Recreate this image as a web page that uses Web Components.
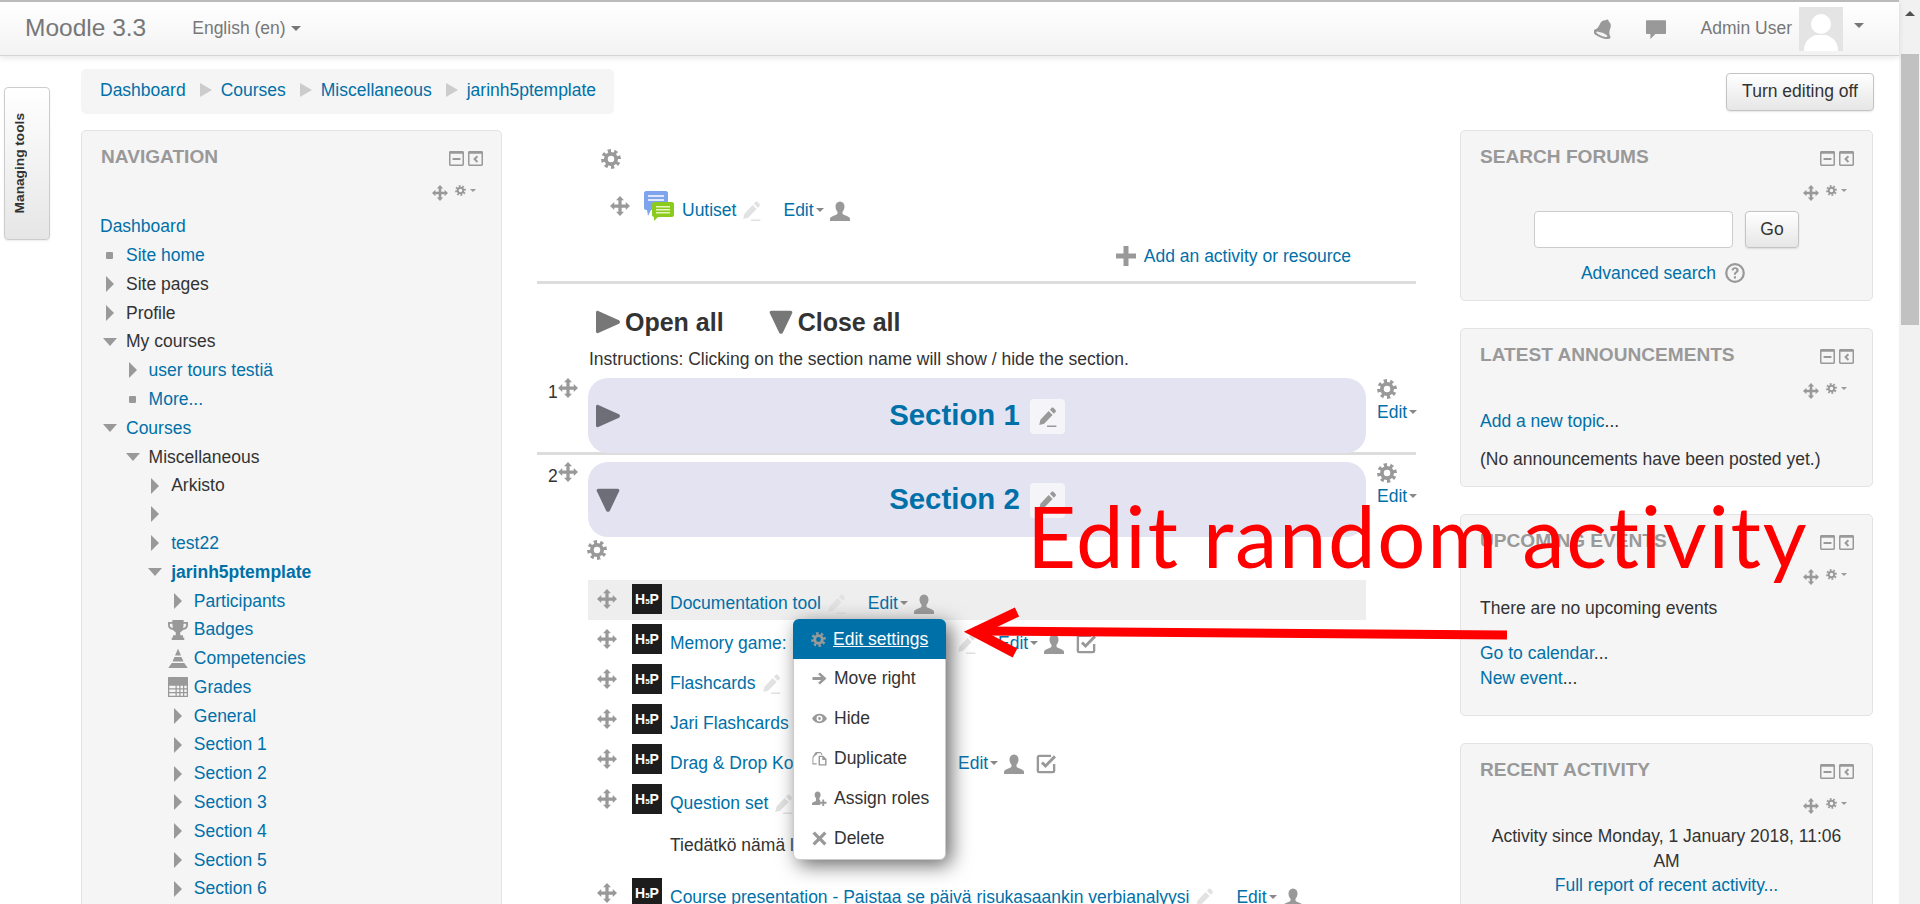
<!DOCTYPE html>
<html>
<head>
<meta charset="utf-8">
<title>Moodle 3.3</title>
<style>
html, body { margin: 0; height: 904px; overflow: hidden; background: #fff; }
body { position: relative; display: flex; font: 17.5px/24.5px "Liberation Sans", Arial, sans-serif; color: #333; }
a { color: #0070a8; text-decoration: none; }
</style>
</head>
<body>
<page-shell>
  <moodle-header></moodle-header>
  <div style="display:flex">
    <managing-tab></managing-tab>
    <div style="width:1792px">
      <top-bar></top-bar>
      <div style="display:flex;align-items:flex-start;margin-top:16px">
        <moodle-block title="NAVIGATION" style="width:421px;height:800px"><nav-tree></nav-tree></moodle-block>
        <course-content style="margin-left:35px;width:879px"></course-content>
        <div style="margin-left:44px;width:413px;display:flex;flex-direction:column;gap:27px">
          <moodle-block title="SEARCH FORUMS" style="height:171px"><search-form></search-form></moodle-block>
          <moodle-block title="LATEST ANNOUNCEMENTS" style="height:159px">
            <div><a href="#">Add a new topic</a>...</div>
            <div style="margin-top:13px">(No announcements have been posted yet.)</div>
          </moodle-block>
          <moodle-block title="UPCOMING EVENTS" style="height:202px">
            <div style="margin-top:1px">There are no upcoming events</div>
            <div style="margin-top:20px"><a href="#">Go to calendar</a>...</div>
            <div style="margin-top:1px"><a href="#">New event</a>...</div>
          </moodle-block>
          <moodle-block title="RECENT ACTIVITY" style="height:300px">
            <div style="text-align:center">Activity since Monday, 1 January 2018, 11:06 AM</div>
            <div style="text-align:center"><a href="#">Full report of recent activity...</a></div>
          </moodle-block>
        </div>
      </div>
    </div>
  </div>
</page-shell>
<fake-scrollbar></fake-scrollbar>
<edit-menu></edit-menu>
<red-annotation></red-annotation>

<script>
const linkCss = 'a { color: #0070a8; text-decoration: none; }'

function gearPath () {
  // eight teeth round a hole, drawn in a 16 box
  let d = ''
  for (let i = 0; i < 16; i++) {
    const a = (i - 0.5) * Math.PI / 8 - Math.PI / 16
    const r = (Math.floor(i / 2) === i / 2) ? 8 : 5.6
    const a2 = a + Math.PI / 8
    d += (i ? 'L' : 'M') + (8 + r * Math.cos(a)).toFixed(2) + ' ' + (8 + r * Math.sin(a)).toFixed(2)
    d += 'L' + (8 + r * Math.cos(a2)).toFixed(2) + ' ' + (8 + r * Math.sin(a2)).toFixed(2)
  }
  return d + 'Z M8 5.4a2.6 2.6 0 1 0 0 5.2a2.6 2.6 0 1 0 0-5.2Z'
}

const icons = {
  gear: `<path fill-rule="evenodd" d="${gearPath()}"/>`,
  move: '<path d="M8 0l3.2 3.4H9.3v3.3h3.3V4.8L16 8l-3.4 3.2V9.3H9.3v3.3h1.9L8 16l-3.2-3.4h1.9V9.3H3.4v1.9L0 8l3.4-3.2v1.9h3.3V3.4H4.8z"/>',
  pencil: '<path d="M11.6.8c.5-.5 1.2-.5 1.700 0l1.500 1.500c.5.5.5 1.200 0 1.700l-1.300 1.300-3.200-3.200zM9.300 3.100l3.200 3.200-6.800 7-3.900 1 .9-4.100zM8 14.800h7.500V16H8z"/>',
  person: '<path d="M8 .4c2.200 0 3.600 1.700 3.600 4 0 1.700-.7 3.200-1.600 4.100v1.300c0 .8 1 1.200 2.600 1.800 1.900.7 3.400 1.400 3.400 2.700V16H0v-1.700c0-1.300 1.500-2 3.400-2.700C5 11 6 10.600 6 9.800V8.500C5.100 7.600 4.400 6.100 4.400 4.400c0-2.300 1.400-4 3.600-4z"/>',
  check: '<path fill="none" stroke="currentColor" stroke-width="1.900" d="M12 1.500H2.500a1 1 0 0 0-1 1v11a1 1 0 0 0 1 1h11a1 1 0 0 0 1-1V8"/><path d="M7.600 11.200L3.900 7.500l1.700-1.600 2 2L14.300 1 16 2.700z"/>',
  plus: '<path d="M6 0h4v6h6v4h-6v6H6v-6H0V6h6z"/>',
  bell: '<g transform="rotate(22 8 8)"><path d="M8 0c.7 0 1.100.4 1.200 1 2.100.5 3.300 2.200 3.300 4.600 0 3 .8 4.600 2.300 6H1.200c1.500-1.400 2.300-3 2.300-6C3.500 3.200 4.700 1.500 6.800 1 6.900.4 7.300 0 8 0z"/><ellipse cx="8" cy="12.600" rx="7.400" ry="2.800"/><ellipse cx="8" cy="12.600" rx="4.800" ry="1.300" fill="#f4f4f4"/></g>',
  chat: '<path d="M.6 1h14.800c.3 0 .6.300.6.600v9.800c0 .3-.3.600-.6.600H7.500L3.500 16v-4H.6c-.3 0-.6-.3-.6-.6V1.600C0 1.300.300 1 .6 1z"/>',
  minbox: '<path fill-rule="evenodd" d="M1.500 0h13c.8 0 1.500.7 1.500 1.500v13c0 .8-.7 1.500-1.500 1.500h-13C.7 16 0 15.300 0 14.500v-13C0 .7.700 0 1.500 0zM1.600 3v11.400h12.800V3zM3.800 7.500h8.400v2.200H3.800z"/>',
  dockbox: '<path fill-rule="evenodd" d="M1.500 0h13c.8 0 1.500.7 1.500 1.500v13c0 .8-.7 1.500-1.500 1.500h-13C.7 16 0 15.300 0 14.500v-13C0 .7.700 0 1.500 0zM1.600 3v11.400h12.800V3zM9.300 4.800l1.500 1.500-2.300 2.300 2.300 2.300-1.500 1.500-3.800-3.800z"/>',
  help: '<circle cx="8" cy="8" r="7" fill="none" stroke="currentColor" stroke-width="1.800"/><path d="M5.200 6c.1-1.700 1.300-2.600 2.900-2.600 1.700 0 2.800 1 2.800 2.300 0 1.100-.6 1.700-1.400 2.200-.7.5-.8.700-.8 1.400H7.100c0-1.200.3-1.800 1.200-2.400.6-.4.800-.7.800-1.100 0-.5-.4-.9-1-.9-.7 0-1.100.4-1.200 1.100zM7.100 10.500h1.700v1.900H7.100z"/>',
  trophy: '<path fill-rule="evenodd" d="M3.500 0h9v1.500H16V4c0 2.400-1.500 3.700-4 4-.6.900-1.400 1.400-2.200 1.700v2.500H12V14h1v2H3v-2h1v-1.800h2.200V9.700C5.400 9.400 4.600 8.900 4 8 1.500 7.700 0 6.400 0 4V1.500h3.500zM1.500 3v1c0 1.200.7 2 2.400 2.400-.2-1-.3-2.100-.4-3.400zm13 0h-2c-.1 1.300-.2 2.400-.4 3.400 1.700-.4 2.400-1.200 2.400-2.400z"/>',
  pyramid: '<path d="M8 .5L10.400 6H5.600zM5.200 7.200h5.600l1.600 3.600H3.600zM3 12h10l2.800 4H.2z"/>',
  grades: '<path fill-rule="evenodd" d="M.5 0h15c.3 0 .5.200.5.500v15c0 .3-.2.500-.5.500H.5c-.3 0-.5-.2-.5-.5V.5C0 .2.200 0 .5 0zM1 7v2h5V7zm6 0v2h2V7zm3 0v2h2V7zm3 0v2h2V7zM1 10v2h5v-2zm6 0v2h2v-2zm3 0v2h2v-2zm3 0v2h2v-2zM1 13v2h5v-2zm6 0v2h2v-2zm3 0v2h2v-2zm3 0v2h2v-2z"/>',
  right: '<path d="M1.500.6l13.800 6.300c.9.400.9 1.800 0 2.200L1.500 15.400C.7 15.700 0 15.200 0 14.400V1.600C0 .8.700.3 1.500.6z"/>',
  down: '<path d="M1.600.5h12.800c.9 0 1.400.8 1.100 1.500L9.200 15.200c-.4.900-2 .9-2.400 0L.5 2C.2 1.300.7.500 1.600.5z"/>',
  arrowr: '<path d="M8.500 1.500L15.500 8l-7 6.500-2-1.900L9.700 9.500H.5v-3h9.200L6.500 3.400z"/>',
  eye: '<path fill-rule="evenodd" d="M8 3c3.300 0 6.200 2 8 5-1.800 3-4.700 5-8 5s-6.200-2-8-5c1.800-3 4.700-5 8-5zm0 1.800a3.200 3.200 0 1 0 0 6.400 3.200 3.200 0 0 0 0-6.400zM8 6.500a1.500 1.500 0 1 1 0 3 1.500 1.500 0 0 1 0-3z"/>',
  dup: '<path fill-rule="evenodd" d="M4 1h5l2 2v1H9.500V2.500H5.500V4H4.500L1.500 7v6H5v1.500H.5V6.500zM7 5h5l3.500 3.500v7H7zM8.500 6.500v7.500h5.500V9.500h-3V6.500z"/>',
  roleadd: '<path d="M6 .5c2 0 3.200 1.500 3.200 3.600 0 1.500-.6 2.800-1.400 3.600v1.200c0 .5.300.8 1 1.100V15H0v-1.500c0-1.200 1.300-1.800 3-2.400 1-.4 1.300-.7 1.300-1.300V7.700C3.400 6.900 2.800 5.600 2.800 4.100 2.800 2 4 .5 6 .5zM11 9h2v2.500h2.500v2H13V16h-2v-2.500H8.800v-2H11z"/>',
  cross: '<path d="M3 .5L8 5.500l5-5L15.500 3l-5 5 5 5-2.500 2.500-5-5-5 5L.5 13l5-5-5-5z"/>'
}

customElements.define('m-icon', class extends HTMLElement {
  constructor () {
    super()
    const size = this.getAttribute('size') || 16
    const color = this.getAttribute('color') || '#999'
    const name = this.getAttribute('name')
    this.attachShadow({ mode: 'open' }).innerHTML = `
      <style>
        :host { display: inline-flex; flex: none; width: ${size}px; height: ${size}px; color: ${color}; }
        svg { width: 100%; height: 100%; fill: currentColor; display: block; }
      </style>
      <svg viewBox="0 0 16 16">${icons[name] || ''}</svg>`
  }
})

customElements.define('page-shell', class extends HTMLElement {
  constructor () {
    super()
    this.attachShadow({ mode: 'open' }).innerHTML = `
      <style>:host { display: block; flex: 1; min-width: 0; }</style><slot></slot>`
  }
})

customElements.define('fake-scrollbar', class extends HTMLElement {
  constructor () {
    super()
    this.attachShadow({ mode: 'open' }).innerHTML = `
      <style>
        :host { display: flex; flex-direction: column; flex: none; width: 21px; height: 904px; background: #f1f1f1; box-sizing: border-box; padding: 0 1px 0 2px; }
        .up { height: 54px; display: flex; justify-content: center; padding-top: 11px; box-sizing: border-box; }
        .up i { width: 0; height: 0; border: 5px solid transparent; border-top: 0; border-bottom: 5px solid #505050; }
        .thumb { height: 271px; background: #c1c1c1; }
      </style>
      <div class="up"><i></i></div>
      <div class="thumb"></div>`
  }
})

customElements.define('moodle-header', class extends HTMLElement {
  constructor () {
    super()
    this.attachShadow({ mode: 'open' }).innerHTML = `
      <style>
        :host { display: flex; align-items: center; height: 56px; box-sizing: border-box; position: relative; z-index: 2;
          border-top: 2px solid #bbb; border-bottom: 1px solid #d4d4d4; background: linear-gradient(#fff, #f3f3f3);
          box-shadow: 0 2px 6px rgba(0,0,0,.1); color: #777; padding-left: 25px; }
        .brand { font-size: 24.5px; }
        .lang { margin-left: 46px; display: flex; align-items: center; gap: 5px; }
        .caret { width: 0; height: 0; border: 5px solid transparent; border-bottom: 0; border-top: 5px solid #777; }
        .right { margin-left: auto; display: flex; align-items: center; }
        .user { margin-left: 35px; }
        .avatar { margin-left: 7px; width: 44px; height: 44px; background: #e4e4e4; }
        .avatar svg { display: block; width: 44px; height: 44px; fill: #fff; }
      </style>
      <span class="brand">Moodle 3.3</span>
      <span class="lang">English (en)<i class="caret"></i></span>
      <div class="right">
        <m-icon name="bell" size="20" color="#999"></m-icon>
        <m-icon name="chat" size="20" color="#999" style="margin-left:32px"></m-icon>
        <span class="user">Admin User</span>
        <div class="avatar"><svg viewBox="0 0 44 44"><circle cx="22" cy="17" r="10"/><path d="M5 44c0-10 6-14 12-16h10c6 2 12 6 12 16z"/></svg></div>
        <i class="caret" style="margin:0 35px 6px 11px"></i>
      </div>`
  }
})

customElements.define('managing-tab', class extends HTMLElement {
  constructor () {
    super()
    this.attachShadow({ mode: 'open' }).innerHTML = `
      <style>
        :host { display: block; flex: none; width: 81px; box-sizing: border-box; padding: 31px 0 0 4px; }
        .tab { width: 46px; height: 153px; box-sizing: border-box; border: 1px solid #ccc; border-radius: 4px;
          background: linear-gradient(to bottom, #fff, #e6e6e6); box-shadow: 0 1px 2px rgba(0,0,0,.08);
          display: flex; align-items: center; padding-left: 7px; }
        span { writing-mode: vertical-rl; transform: rotate(180deg); font-weight: bold; font-size: 13.7px; line-height: 15px; color: #333; white-space: nowrap; }
      </style>
      <div class="tab"><span>Managing tools</span></div>`
  }
})

customElements.define('top-bar', class extends HTMLElement {
  constructor () {
    super()
    this.attachShadow({ mode: 'open' }).innerHTML = `
      <style>
        ${linkCss}
        :host { display: flex; justify-content: space-between; align-items: center; padding-top: 13px; width: 1793px; }
        nav { display: flex; align-items: center; height: 45px; box-sizing: border-box; padding: 0 18px 3px 19px; background: #f5f5f5; border-radius: 5px; }
        .sep { width: 0; height: 0; margin: 0 9px 0 14px; border: 7px solid transparent; border-right: 0; border-left: 12px solid #ccc; }
        button { font: inherit; color: #333; width: 148px; height: 38px; padding: 0; border: 1px solid #c4c4c4; border-radius: 4px;
          background: linear-gradient(#fff, #e6e6e6); box-shadow: 0 1px 2px rgba(0,0,0,.1); }
      </style>
      <nav><a href="#">Dashboard</a><i class="sep"></i><a href="#">Courses</a><i class="sep"></i><a href="#">Miscellaneous</a><i class="sep"></i><a href="#">jarinh5ptemplate</a></nav>
      <button>Turn editing off</button>`
  }
})

customElements.define('moodle-block', class extends HTMLElement {
  constructor () {
    super()
    this.attachShadow({ mode: 'open' }).innerHTML = `
      <style>
        :host { display: block; box-sizing: border-box; background: #f5f5f5; border: 1px solid #e3e3e3; border-radius: 5px; padding: 0 19px; flex: none; }
        .head { position: relative; height: 80px; }
        h2 { margin: 0; padding-top: 14px; font-size: 19.1px; line-height: 24px; font-weight: bold; color: #999; }
        .ctl { display: flex; justify-content: flex-end; }
      </style>
      <div class="head">
        <h2>${this.getAttribute('title')}</h2>
        <div class="ctl" style="position:absolute;top:20px;right:-1px;gap:4px"><m-icon name="minbox" size="15"></m-icon><m-icon name="dockbox" size="15"></m-icon></div>
        <div class="ctl" style="position:absolute;top:54px;right:6px;align-items:flex-start">
          <m-icon name="move" size="16"></m-icon>
          <m-icon name="gear" size="11" style="margin-left:7px"></m-icon>
          <i style="margin:4px 0 0 4px;border:3px solid transparent;border-bottom:0;border-top:3px solid #999"></i>
        </div>
      </div>
      <slot></slot>`
    this.removeAttribute('title')
  }
})

customElements.define('search-form', class extends HTMLElement {
  constructor () {
    super()
    this.attachShadow({ mode: 'open' }).innerHTML = `
      <style>
        ${linkCss}
        :host { display: block; }
        .row { display: flex; justify-content: center; gap: 12px; }
        input { width: 199px; height: 37px; box-sizing: border-box; border: 1px solid #ccc; border-radius: 4px; background: #fff; padding: 0; }
        button { width: 54px; height: 37px; font: inherit; color: #333; padding: 0; border: 1px solid #c4c4c4; border-radius: 4px;
          background: linear-gradient(#fff, #e6e6e6); box-shadow: 0 1px 2px rgba(0,0,0,.1); }
        .adv { display: flex; justify-content: center; align-items: center; gap: 9px; margin-top: 13px; padding-right: 7px; }
      </style>
      <div class="row"><input type="text"><button>Go</button></div>
      <div class="adv"><a href="#">Advanced search</a><m-icon name="help" size="20"></m-icon></div>`
  }
})

const navItems = [
  [-1, '', 'Dashboard', 1],
  [0, 'sq', 'Site home', 1],
  [0, 'r', 'Site pages'],
  [0, 'r', 'Profile'],
  [0, 'd', 'My courses'],
  [1, 'r', 'user tours testiä', 1],
  [1, 'sq', 'More...', 1],
  [0, 'd', 'Courses', 1],
  [1, 'd', 'Miscellaneous'],
  [2, 'r', 'Arkisto'],
  [2, 'r', ''],
  [2, 'r', 'test22', 1],
  [2, 'd', 'jarinh5ptemplate', 2],
  [3, 'r', 'Participants', 1],
  [3, 'trophy', 'Badges', 1],
  [3, 'pyramid', 'Competencies', 1],
  [3, 'grades', 'Grades', 1],
  [3, 'r', 'General', 1],
  [3, 'r', 'Section 1', 1],
  [3, 'r', 'Section 2', 1],
  [3, 'r', 'Section 3', 1],
  [3, 'r', 'Section 4', 1],
  [3, 'r', 'Section 5', 1],
  [3, 'r', 'Section 6', 1]
]

customElements.define('nav-tree', class extends HTMLElement {
  constructor () {
    super()
    const row = ([depth, kind, label, link]) => {
      let icon = ''
      if (kind === 'sq') icon = '<i class="sq"></i>'
      if (kind === 'r') icon = '<i class="r"></i>'
      if (kind === 'd') icon = '<i class="d"></i>'
      if (['trophy', 'pyramid', 'grades'].includes(kind)) icon = `<m-icon name="${kind}" size="20"></m-icon>`
      const text = link ? `<a href="#"${link === 2 ? ' style="font-weight:bold"' : ''}>${label}</a>` : label
      const pad = depth < 0 ? 0 : depth * 22.6
      return `<li style="padding-left:${pad}px">${depth < 0 ? '' : `<span class="ic">${icon}</span>`}${text}</li>`
    }
    this.attachShadow({ mode: 'open' }).innerHTML = `
      <style>
        ${linkCss}
        :host { display: block; margin: 1px -2px 0 -1px; }
        ul { margin: 0; padding: 0; list-style: none; }
        li { height: 28.8px; display: flex; align-items: center; color: #333; }
        .ic { width: 26px; flex: none; display: flex; align-items: center; height: 20px; }
        .r { margin-left: 6px; width: 0; height: 0; border: 8px solid transparent; border-right: 0; border-left: 8px solid #999; }
        .d { margin-left: 3px; width: 0; height: 0; border: 7px solid transparent; border-bottom: 0; border-top: 8px solid #999; }
        .sq { margin-left: 6px; width: 7px; height: 7px; background: #999; border-radius: 1px; }
      </style>
      <ul>${navItems.map(row).join('')}</ul>`
  }
})

customElements.define('edit-link', class extends HTMLElement {
  constructor () {
    super()
    this.attachShadow({ mode: 'open' }).innerHTML = `
      <style>
        ${linkCss}
        :host { display: inline-flex; align-items: center; flex: none; }
        i { margin-left: 2px; border: 4.5px solid transparent; border-bottom: 0; border-top: 4.5px solid #888; }
      </style>
      <a href="#">Edit</a><i></i>`
  }
})

customElements.define('activity-row', class extends HTMLElement {
  constructor () {
    super()
    const has = a => this.hasAttribute(a)
    const w = this.getAttribute('name-width')
    this.attachShadow({ mode: 'open' }).innerHTML = `
      <style>
        ${linkCss}
        :host { display: flex; align-items: flex-start; width: 778px; height: 40px; padding-left: 9px; box-sizing: border-box; ${has('highlight') ? 'background:#eee;' : ''} }
        .h5p { width: 30px; height: 30px; margin: 4px 0 0 15px; background: #1d1d1d; color: #fff; font-weight: bold; font-size: 14px; line-height: 30px; text-align: center; flex: none; white-space: nowrap; }
        .h5p small { font-size: 8px; }
        .name { margin: 11px 0 0 8px; white-space: nowrap; ${w ? `width:${w}px;flex:none;` : ''} }
      </style>
      <m-icon name="move" size="20" style="margin-top:9px"></m-icon>
      <div class="h5p">H<small>5</small>P</div>
      <a class="name" href="#">${this.getAttribute('name')}</a>
      ${has('pencil') ? '<m-icon name="pencil" size="20" color="#e2e2e2" style="margin:14px 0 0 5px"></m-icon>' : ''}
      ${has('edit') ? '<edit-link style="margin:11px 0 0 22px"></edit-link>' : ''}
      ${has('edit') ? '<m-icon name="person" size="20" color="#999" style="margin:14px 0 0 6px"></m-icon>' : ''}
      ${has('check') ? '<m-icon name="check" size="20" color="#999" style="margin:14px 0 0 12px"></m-icon>' : ''}`
    this.removeAttribute('name')
  }
})

customElements.define('course-section', class extends HTMLElement {
  constructor () {
    super()
    const n = this.getAttribute('number')
    const open = this.hasAttribute('open')
    this.attachShadow({ mode: 'open' }).innerHTML = `
      <style>
        ${linkCss}
        :host { display: block; }
        .line { display: flex; align-items: flex-start; ${open ? '' : 'border-bottom: 3px solid #ddd; height: 74px;'} }
        .num { width: 51px; flex: none; display: flex; padding-left: 11px; box-sizing: border-box; }
        .num span { margin-top: 2px; }
        .box { width: 778px; height: 75px; flex: none; background: #e3e3f2; border-radius: 20px; display: grid; grid-template-columns: 40px 1fr 40px; align-items: center; }
        .title { display: flex; justify-content: center; align-items: center; gap: 10px; }
        .title a { color: #0070a8; font-weight: bold; font-size: 29.4px; line-height: 34px; margin-top: -2px; }
        .pen { width: 35px; height: 35px; background: #f5f5f9; border-radius: 4px; display: flex; align-items: center; justify-content: center; margin-top: 2px; }
        .side { margin-left: 11px; display: flex; flex-direction: column; line-height: 24px; }
        .side m-icon { margin-top: 1px; }
        .side edit-link { margin-top: 1px; }
        .inner { padding-left: 51px; }
      </style>
      <div class="line">
        <div class="num"><span>${n}</span><m-icon name="move" size="20"></m-icon></div>
        <div class="box">
          <m-icon name="${open ? 'down' : 'right'}" size="24" color="#6e6e78" style="margin-left:8px"></m-icon>
          <div class="title"><a href="#">Section ${n}</a><div class="pen"><m-icon name="pencil" size="20" color="#999"></m-icon></div></div>
          <span></span>
        </div>
        <div class="side"><m-icon name="gear" size="20"></m-icon><edit-link></edit-link></div>
      </div>
      <div class="inner"><slot></slot></div>`
  }
})

customElements.define('course-content', class extends HTMLElement {
  constructor () {
    super()
    this.attachShadow({ mode: 'open' }).innerHTML = `
      <style>
        ${linkCss}
        :host { display: block; flex: none; }
        .g0 { display: block; margin: 19px 0 0 64px; }
        .news { display: flex; align-items: flex-start; height: 30px; margin-top: 22px; padding-left: 73px; }
        .forum { width: 30px; height: 30px; margin-left: 14px; flex: none; }
        .add { display: flex; justify-content: flex-end; align-items: center; gap: 8px; margin-top: 23px; padding-right: 65px; }
        hr { height: 3px; border: 0; background: #ddd; margin: 12px 0 0 0; }
        .toggles { display: flex; align-items: center; margin: 26px 0 0 59px; font-weight: bold; font-size: 25px; line-height: 24px; }
        .toggles span { margin-left: 5px; }
        .ins { margin: 13px 0 7px 52px; }
      </style>
      <m-icon class="g0" name="gear" size="20" style="display:block"></m-icon>
      <div class="news">
        <m-icon name="move" size="20" style="margin-top:5px"></m-icon>
        <svg class="forum" viewBox="0 0 30 30">
          <path d="M2 0h20c1 0 2 1 2 2v15c0 1-1 2-2 2H7l-3 6-1-6H2c-1 0-2-1-2-2V2C0 1 1 0 2 0z" fill="#7ea4ee"/>
          <path d="M4 4h16v2H4zM4 8h16v2H4z" fill="#dfe8fb"/>
          <path d="M10 11h18c1 0 2 1 2 2v11c0 1-1 2-2 2H14l-4 4v-4c-1 0-2-1-2-2V13c0-1 1-2 2-2z" fill="#8cca1e"/>
          <path d="M12 15h14v1.500H12zM12 18h14v1.500H12zM12 21h14v1.500H12z" fill="#e6f5c0"/>
        </svg>
        <a href="#" style="margin:7px 0 0 8px">Uutiset</a>
        <m-icon name="pencil" size="20" color="#e2e2e2" style="margin:10px 0 0 5px"></m-icon>
        <edit-link style="margin:7px 0 0 22px"></edit-link>
        <m-icon name="person" size="20" style="margin:10px 0 0 6px"></m-icon>
      </div>
      <div class="add"><m-icon name="plus" size="20"></m-icon><a href="#">Add an activity or resource</a></div>
      <hr>
      <div class="toggles">
        <m-icon name="right" size="24" color="#777"></m-icon><span>Open all</span>
        <m-icon name="down" size="24" color="#777" style="margin-left:45px"></m-icon><span>Close all</span>
      </div>
      <div class="ins">Instructions: Clicking on the section name will show / hide the section.</div>
      <course-section number="1"></course-section>
      <course-section number="2" open style="margin-top:7px">
        <m-icon name="gear" size="20" style="display:block;margin:3px 0 20px -1px"></m-icon>
        <activity-row name="Documentation tool" highlight pencil edit></activity-row>
        <activity-row name="Memory game:" name-width="281" pencil edit check></activity-row>
        <activity-row name="Flashcards" pencil></activity-row>
        <activity-row name="Jari Flashcards" pencil></activity-row>
        <activity-row name="Drag &amp; Drop Ko" name-width="241" pencil edit check></activity-row>
        <activity-row name="Question set" pencil></activity-row>
        <div style="padding:13px 0 0 82px;height:41px;line-height:24px">Tiedätkö nämä l</div>
        <activity-row name="Course presentation - Paistaa se päivä risukasaankin verbianalyysi" pencil edit></activity-row>
      </course-section>`
  }
})

customElements.define('edit-menu', class extends HTMLElement {
  constructor () {
    super()
    const items = [['gear', 'Edit settings'], ['arrowr', 'Move right'], ['eye', 'Hide'], ['dup', 'Duplicate'], ['roleadd', 'Assign roles'], ['cross', 'Delete']]
    this.attachShadow({ mode: 'open' }).innerHTML = `
      <style>
        :host { position: absolute; left: 793px; top: 619px; width: 153px; height: 241px; box-sizing: border-box; background: #fff;
          border: 1px solid #ccc; border-radius: 6px; box-shadow: 5px 5px 20px #666; z-index: 3; }
        a { display: flex; align-items: center; height: 40px; box-sizing: border-box; padding: 0 0 2px 18px; color: #333; text-decoration: none; }
        a m-icon { margin-right: 7px; }
        a.on { margin: -1px -1px 0; padding-left: 18px; padding-bottom: 0; background: #0070a8; color: #fff; text-decoration: underline; border-radius: 6px 6px 0 0; }
      </style>
      ${items.map(([ic, label], i) => `<a href="#" class="${i ? '' : 'on'}"><m-icon name="${ic}" size="15"></m-icon>${label}</a>`).join('')}`
  }
})

customElements.define('red-annotation', class extends HTMLElement {
  constructor () {
    super()
    this.attachShadow({ mode: 'open' }).innerHTML = `
      <style>
        :host { position: absolute; left: 0; top: 0; width: 1920px; height: 904px; pointer-events: none; z-index: 4; display: block; }
        .say { position: absolute; left: 1027px; top: 485px; font: 85px/100px Lato, "Liberation Sans", sans-serif; letter-spacing: 1.7px; color: #f00; white-space: nowrap; }
        svg { position: absolute; left: 0; top: 0; }
      </style>
      <div class="say">Edit random activity</div>
      <svg width="1920" height="904" fill="none" stroke="#f00" stroke-width="9">
        <path d="M1507 635L975 631"/>
        <path d="M1017 612L975 632L1015 653" stroke-width="10"/>
      </svg>`
  }
})
</script>
</body>
</html>
